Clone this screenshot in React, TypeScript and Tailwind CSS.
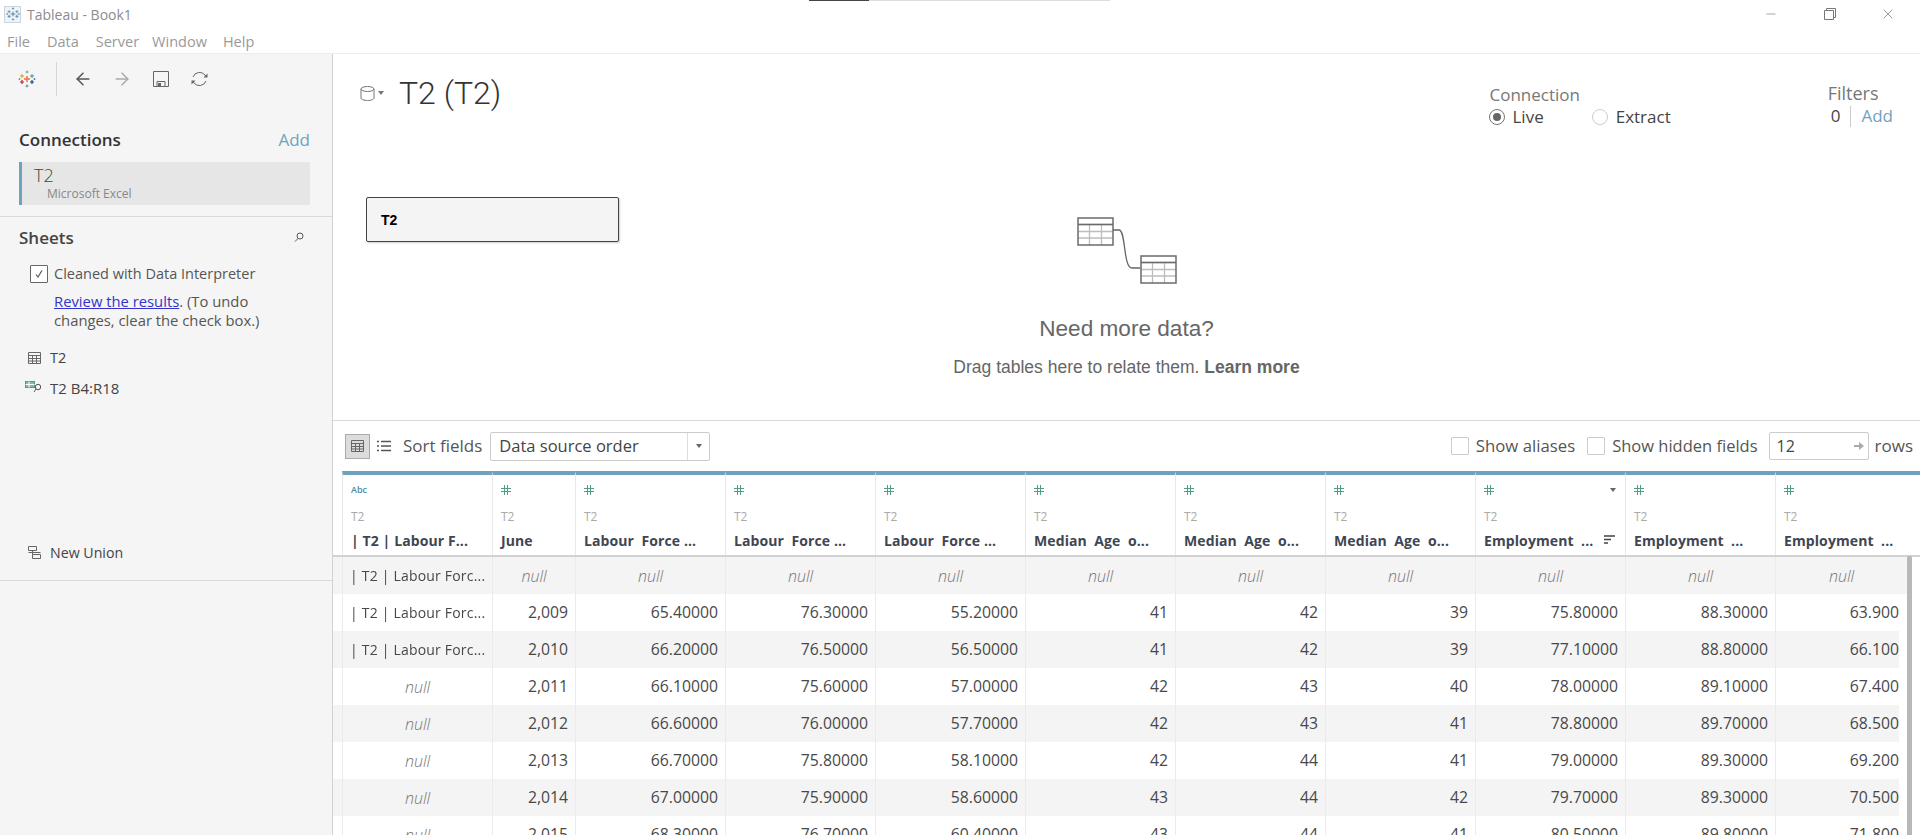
import { ArrowLeft, ArrowRight, Minus, X } from 'lucide-react';

const columns = [
  { width: 'w-[150px]', name: '| T2 | Labour F...', type: 'abc' },
  { width: 'w-[83px]', name: 'June', type: 'num' },
  { width: 'w-[150px]', name: 'Labour  Force ...', type: 'num' },
  { width: 'w-[150px]', name: 'Labour  Force ...', type: 'num' },
  { width: 'w-[150px]', name: 'Labour  Force ...', type: 'num' },
  { width: 'w-[150px]', name: 'Median  Age  o...', type: 'num' },
  { width: 'w-[150px]', name: 'Median  Age  o...', type: 'num' },
  { width: 'w-[150px]', name: 'Median  Age  o...', type: 'num' },
  { width: 'w-[150px]', name: 'Employment  ...', type: 'num', sorted: true },
  { width: 'w-[150px]', name: 'Employment  ...', type: 'num' },
  { width: 'w-[145px]', name: 'Employment  ...', type: 'num' },
];

const rows = [
  ['| T2 | Labour Forc...', 'null', 'null', 'null', 'null', 'null', 'null', 'null', 'null', 'null', 'null'],
  ['| T2 | Labour Forc...', '2,009', '65.40000', '76.30000', '55.20000', '41', '42', '39', '75.80000', '88.30000', '63.900'],
  ['| T2 | Labour Forc...', '2,010', '66.20000', '76.50000', '56.50000', '41', '42', '39', '77.10000', '88.80000', '66.100'],
  ['null', '2,011', '66.10000', '75.60000', '57.00000', '42', '43', '40', '78.00000', '89.10000', '67.400'],
  ['null', '2,012', '66.60000', '76.00000', '57.70000', '42', '43', '41', '78.80000', '89.70000', '68.500'],
  ['null', '2,013', '66.70000', '75.80000', '58.10000', '42', '44', '41', '79.00000', '89.30000', '69.200'],
  ['null', '2,014', '67.00000', '75.90000', '58.60000', '43', '44', '42', '79.70000', '89.30000', '70.500'],
  ['null', '2,015', '68.30000', '76.70000', '60.40000', '43', '44', '41', '80.50000', '89.80000', '71.800'],
];

function Cross({ x, y, s, c, w = 1 }: { x: number; y: number; s: number; c: string; w?: number }) {
  return <path d={`M${x - s} ${y}H${x + s}M${x} ${y - s}V${y + s}`} stroke={c} strokeWidth={w} fill="none" />;
}

function TableauLogo({ size, mono }: { size: number; mono?: boolean }) {
  return (
    <svg width={size} height={size} viewBox="0 0 18 18">
      <Cross x={9} y={9} s={3} c={mono ? '#5b87a8' : '#e8762d'} w={1.4} />
      <Cross x={4} y={6} s={2} c={mono ? '#5b87a8' : '#eb912c'} />
      <Cross x={14} y={6} s={2} c={mono ? '#5b87a8' : '#5b879b'} />
      <Cross x={4} y={12} s={2} c={mono ? '#5b87a8' : '#c72035'} w={1.2} />
      <Cross x={14} y={12} s={2} c={mono ? '#5b87a8' : '#1f457e'} w={1.2} />
      <Cross x={9} y={2} s={1.4} c={mono ? '#5b87a8' : '#7099a6'} />
      <Cross x={9} y={16} s={1.4} c={mono ? '#5b87a8' : '#59879b'} />
      <Cross x={1.5} y={9} s={1} c={mono ? '#5b87a8' : '#7099a6'} />
      <Cross x={16.5} y={9} s={1} c={mono ? '#5b87a8' : '#59879b'} />
    </svg>
  );
}

function MiniTable() {
  return (
    <svg width="37" height="29" viewBox="0 0 37 29" fill="none">
      <path d="M1 7.5H36M1 14.5H36M1 21H36M12.5 7.5V28M24.5 7.5V28" stroke="#bdbdbd" strokeWidth="1.3" />
      <rect x="1" y="1" width="35" height="27" stroke="#6b6b6b" strokeWidth="1.5" />
      <path d="M1 7.5H36" stroke="#6b6b6b" strokeWidth="1.5" />
    </svg>
  );
}

function GridIcon({ color = '#666' }: { color?: string }) {
  return (
    <svg width="13" height="12" viewBox="0 0 13 12" fill="none" stroke={color}>
      <path d="M.5.5h12v11H.5zM.5 3.5h12M.5 6.5h12M.5 9h12M4.5 3.5v8M8.5 3.5v8" />
    </svg>
  );
}

function Caret({ color = '#666' }: { color?: string }) {
  return <div className="w-0 h-0 border-x-[3.5px] border-x-transparent border-t-[4px]" style={{ borderTopColor: color }} />;
}

function Sidebar() {
  return (
    <aside className="w-[333px] shrink-0 bg-[#f5f5f5] border-r border-[#d2d2d2] flex flex-col">
      <div className="h-[49px] flex items-center pl-[18px] text-[#666]">
        <TableauLogo size={18} />
        <div className="w-px h-[34px] bg-[#d6d6d6] ml-[20px] mr-[16px]" />
        <ArrowLeft size={20} strokeWidth={1.8} color="#555" />
        <ArrowRight size={20} strokeWidth={1.8} color="#aaa" className="ml-[19px]" />
        <svg width="16" height="16" viewBox="0 0 16 16" fill="none" stroke="#666" className="ml-[21px]">
          <path d="M.5.5h15v15H.5zM4 15.5v-5h8v5" />
          <rect x="5" y="12" width="3" height="3" fill="#666" stroke="none" />
        </svg>
        <svg width="17" height="16" viewBox="0 0 17 16" fill="none" stroke="#666" className="ml-[22px]">
          <path d="M2 6a7 7 0 0 1 12-2l1 1.5M15 10a7 7 0 0 1-12 2l-1-1.5" />
          <path d="M16.500 2.500v4h-4z" fill="#666" stroke="none" />
          <path d="M.5 13.500v-4h4z" fill="#666" stroke="none" />
        </svg>
      </div>

      <div className="flex items-baseline justify-between pl-[19px] pr-[22px] pt-[24px]">
        <span className="text-[17px] font-semibold text-[#333]">Connections</span>
        <span className="text-[17px] text-[#6ea3bf]">Add</span>
      </div>
      <div className="ml-[19px] mr-[22px] mt-[9px] h-[43px] bg-[#e6e6e6] border-l-[3px] border-[#6ea3bf] pl-[12px] pt-[2px] flex flex-col">
        <span className="text-[18px] leading-[23px] font-light text-[#444]">T2</span>
        <span className="text-[12px] leading-[14px] text-[#888] pl-[13px]">Microsoft Excel</span>
      </div>
      <div className="mt-[11px] border-t border-[#d9d9d9]" />

      <div className="flex items-center justify-between pl-[19px] pr-[28px] pt-[8px]">
        <span className="text-[17px] font-semibold text-[#444]">Sheets</span>
        <svg width="10" height="10" viewBox="0 0 10 10" fill="none" stroke="#555">
          <circle cx="6" cy="4" r="3" />
          <path d="M4 6.500L1 9.500" />
        </svg>
      </div>
      <div className="flex items-center pl-[30px] mt-[13px]">
        <div className="w-[18px] h-[18px] border border-[#666] rounded-[1px] bg-white flex items-center justify-center">
          <svg width="10" height="10" viewBox="0 0 10 10" fill="none" stroke="#555" strokeWidth="1.2">
            <path d="M2 5.500l2 2.500 4-6.500" />
          </svg>
        </div>
        <span className="ml-[6px] text-[14.500px] text-[#555]">Cleaned with Data Interpreter</span>
      </div>
      <p className="pl-[54px] mt-[7px] text-[14.800px] leading-[19px] text-[#555]">
        <span className="text-[#3333cc] underline">Review the results</span>. (To undo
        <br />
        changes, clear the check box.)
      </p>
      <div className="flex items-center pl-[28px] mt-[17px] h-[22px]">
        <GridIcon />
        <span className="ml-[9px] text-[14.500px] text-[#444]">T2</span>
      </div>
      <div className="flex items-center pl-[25px] mt-[8px] h-[22px]">
        <svg width="17" height="13" viewBox="0 0 17 13" fill="none">
          <rect x=".5" y=".5" width="9" height="6" fill="#7cc1a0" stroke="#4f9e7c" />
          <path d="M.5 3.500h9M4 .5v6" stroke="#fff" />
          <circle cx="13" cy="6" r="2.700" stroke="#555" />
          <path d="M11 8l-2 3" stroke="#555" />
        </svg>
        <span className="ml-[8px] text-[15px] text-[#444]">T2 B4:R18</span>
      </div>
      <div className="flex items-center pl-[28px] mt-[143px] h-[22px]">
        <svg width="13" height="13" viewBox="0 0 13 13" fill="none" stroke="#666">
          <path d="M.5.5h8v4h-8zM4.500 8.500h8v4h-8zM4.500 4.500v4M.5 6.500h12" />
        </svg>
        <span className="ml-[9px] text-[14.200px] text-[#444]">New Union</span>
      </div>
      <div className="mt-[16px] border-t border-[#d9d9d9]" />
    </aside>
  );
}

function SourceHeader() {
  return (
    <section className="h-[367px] shrink-0 border-b border-[#d9d9d9] flex flex-col">
      <div className="flex items-start h-[143px]">
        <div className="flex items-center pl-[27px] pt-[17px]">
          <svg width="15" height="15" viewBox="0 0 15 15" fill="none" stroke="#777">
            <ellipse cx="7.500" cy="3" rx="6.500" ry="2.500" />
            <path d="M1 3v9c0 1.500 3 2.500 6.500 2.500S14 13.500 14 12V3" />
          </svg>
          <div className="ml-[3px] mr-[15px]">
            <Caret color="#777" />
          </div>
          <span className="text-[32px] leading-[44px] font-light text-[#333] font-['Roboto',sans-serif]">T2 (T2)</span>
        </div>
        <div className="ml-auto mr-[155px] pt-[30px]">
          <div className="text-[17px] leading-[22px] text-[#777]">Connection</div>
          <div className="flex items-center h-[22px]">
            <div className="w-[16px] h-[16px] rounded-full border border-[#777] flex items-center justify-center">
              <div className="w-[8px] h-[8px] rounded-full bg-[#666]" />
            </div>
            <span className="ml-[7px] text-[17px] text-[#444]">Live</span>
            <div className="ml-[48px] w-[16px] h-[16px] rounded-full border border-[#ccc]" />
            <span className="ml-[8px] text-[17px] text-[#444]">Extract</span>
          </div>
        </div>
        <div className="mr-[27px] pt-[28px]">
          <div className="text-[18px] leading-[22px] text-[#777] pl-[2px]">Filters</div>
          <div className="flex items-center h-[22px] mt-px pl-[5px]">
            <span className="text-[17px] text-[#444]">0</span>
            <div className="w-px h-[21px] bg-[#ccc] mx-[10px]" />
            <span className="text-[17px] text-[#6ea3bf]">Add</span>
          </div>
        </div>
      </div>

      <div className="grid grid-cols-[1fr_auto_1fr]">
        <div className="pl-[33px]">
          <div className="w-[253px] h-[45px] bg-[#f4f4f4] border border-[#444] rounded-[2px] shadow-[1px_1px_2px_rgba(0,0,0,0.2)] flex items-center pl-[14px] pt-px">
            <span className="text-[14px] font-bold text-black font-['Liberation_Sans',sans-serif]">T2</span>
          </div>
        </div>
        <div className="flex flex-col items-center pt-[20px] font-['Liberation_Sans',sans-serif]">
          <div className="relative w-[100px] h-[69px]">
            <div className="absolute left-0 top-0"><MiniTable /></div>
            <svg className="absolute left-[36px] top-[12px]" width="28" height="40" viewBox="0 0 28 40" fill="none" stroke="#666" strokeWidth="1.300">
              <path d="M0 1h6c7 0 4 38 13 38h8" />
            </svg>
            <div className="absolute right-0 top-[38px]"><MiniTable /></div>
          </div>
          <div className="mt-[28px] text-[22.600px] leading-[30px] text-[#666]">Need more data?</div>
          <div className="mt-[11px] text-[17.500px] leading-[24px] text-[#666]">
            Drag tables here to relate them. <span className="font-bold">Learn more</span>
          </div>
        </div>
        <div />
      </div>
    </section>
  );
}

function GridToolbar() {
  return (
    <div className="h-[50px] shrink-0 flex items-center pl-[12px] pr-[7px] text-[#555]">
      <div className="w-[25px] h-[25px] bg-[#dcdcdc] border border-[#aaa] flex items-center justify-center">
        <GridIcon />
      </div>
      <svg width="14" height="12" viewBox="0 0 14 12" stroke="#555" strokeWidth="1.500" className="ml-[7px]">
        <path d="M0 1.500h2M4 1.500h10M0 6h2M4 6h10M0 10.500h2M4 10.500h10" />
      </svg>
      <span className="ml-[12px] text-[17px]">Sort fields</span>
      <div className="ml-[8px] w-[220px] h-[29px] border border-[#ccc] rounded-[2px] flex items-center">
        <span className="flex-1 pl-[8px] text-[16.500px] text-[#444]">Data source order</span>
        <div className="w-[22px] h-full border-l border-[#ddd] flex items-center justify-center">
          <Caret />
        </div>
      </div>
      <div className="ml-auto w-[18px] h-[18px] border border-[#ccc] rounded-[1px]" />
      <span className="ml-[7px] text-[16.750px]">Show aliases</span>
      <div className="ml-[12px] w-[18px] h-[18px] border border-[#ccc] rounded-[1px]" />
      <span className="ml-[7px] text-[16.500px]">Show hidden fields</span>
      <div className="ml-[11px] w-[100px] h-[28px] border border-[#ccc] rounded-[2px] flex items-center justify-between pl-[7px] pr-[4px]">
        <span className="text-[16px] text-[#444]">12</span>
        <svg width="10" height="8" viewBox="0 0 10 8" fill="#aaa">
          <path d="M0 3h5V0l5 4-5 4V5H0z" />
        </svg>
      </div>
      <span className="ml-[6px] text-[17px]">rows</span>
    </div>
  );
}

function ColumnHeader() {
  return (
    <div className="flex h-[86px] shrink-0 pl-[9px] border-b-2 border-[#d2d2d2]">
      {columns.map((col, i) => (
        <div key={i} className={`${col.width} shrink-0 relative border-t-[4px] border-t-[#6ea3bf] border-l border-l-[#e9e9e9] pl-[8px] flex flex-col`}>
          <div className="h-[22px] flex items-end">
            {col.type === 'abc' ? (
              <span className="text-[9px] leading-[14px] font-semibold text-[#4f8aa0]">Abc</span>
            ) : (
              <svg width="10" height="10" viewBox="0 0 10 10" stroke="#4f9e86" className="mb-[2px]">
                <path d="M0 3.500h10M0 6.500h10M3.500 0v10M6.500 0v10" />
              </svg>
            )}
          </div>
          <span className="mt-[12px] text-[12px] leading-[16px] text-[#aaa]">T2</span>
          <span className="mt-[6px] text-[14px] leading-[20px] font-bold text-[#3f4652] whitespace-pre tracking-[0.1px]">{col.name}</span>
          {col.sorted && (
            <>
              <div className="absolute right-[9px] top-[13px]">
                <Caret />
              </div>
              <svg width="11" height="9" viewBox="0 0 11 9" stroke="#444" strokeWidth="1.400" className="absolute right-[10px] top-[60px]">
                <path d="M0 1h11M0 4.500h7M0 8h4" />
              </svg>
            </>
          )}
        </div>
      ))}
    </div>
  );
}

function DataRow({ values, index }: { values: string[]; index: number }) {
  const striped = index % 2 === 0;
  return (
    <div className={`flex h-[37px] shrink-0 pl-[9px] ${index === 0 ? 'w-[1574px]' : 'w-[1566px]'} ${striped ? 'bg-[#f4f4f4]' : 'bg-white'}`}>
      {values.map((value, i) => {
        const isNull = value === 'null';
        const isFirstText = i === 0 && !isNull;
        const last = i === values.length - 1;
        return (
          <div
            key={i}
            className={`${last ? 'flex-1' : columns[i].width} shrink-0 border-l border-[#ebebeb] flex items-center overflow-hidden whitespace-nowrap ${
              isNull ? 'justify-center' : isFirstText ? 'justify-start pl-[7px]' : last ? 'justify-end' : 'justify-end pr-[7px]'
            }`}
          >
            <span
              className={
                isNull
                  ? 'text-[16px] italic font-light text-[#777]'
                  : isFirstText
                    ? 'text-[14px] tracking-[0.2px] text-[#484848] will-change-transform'
                    : 'text-[15.750px] text-[#484848]'
              }
            >
              {value}
            </span>
          </div>
        );
      })}
    </div>
  );
}

export default function App() {
  return (
    <div className="relative w-[1920px] h-[835px] overflow-hidden bg-white flex flex-col font-['Open_Sans',sans-serif]">
      {/* loading strip along the top edge */}
      <div className="absolute top-0 left-[809px] flex h-px">
        <div className="w-[60px] bg-[#444]" />
        <div className="w-[241px] bg-[#ddd]" />
      </div>

      <div className="h-[27px] shrink-0 flex items-center pl-[4px] pt-px">
        <div className="w-[17px] h-[17px] bg-[#eef3f6] border border-[#c9d6de] flex items-center justify-center">
          <TableauLogo size={14} mono />
        </div>
        <span className="ml-[6px] text-[14px] text-[#8c8c8c]">Tableau - Book1</span>
        <div className="ml-auto flex items-center text-[#666]">
          <Minus size={14} strokeWidth={1} />
          <svg width="12" height="12" viewBox="0 0 12 12" fill="none" stroke="#777" className="ml-[46px]">
            <path d="M.5 2.500h9v9h-9zM2.500 2.500v-2h9v9h-2" />
          </svg>
          <X size={16} strokeWidth={1} className="ml-[44px] mr-[24px]" />
        </div>
      </div>
      <nav className="h-[27px] shrink-0 flex items-center pl-[7px] pt-[4px] text-[14.500px] text-[#999] border-b border-[#ececec]">
        <span className="mr-[17px]">File</span>
        <span className="mr-[17px]">Data</span>
        <span className="mr-[13px]">Server</span>
        <span className="mr-[16px]">Window</span>
        <span>Help</span>
      </nav>

      <div className="flex-1 flex min-h-0">
        <Sidebar />
        <main className="flex-1 min-w-0 flex flex-col overflow-hidden relative">
          <SourceHeader />
          <GridToolbar />
          <ColumnHeader />
          {rows.map((values, i) => (
            <DataRow key={i} values={values} index={i} />
          ))}
          <div className="absolute right-[8px] top-[502px] bottom-0 w-[5px] bg-[#b8b8b8] rounded-t-[2px]" />
        </main>
      </div>
    </div>
  );
}
